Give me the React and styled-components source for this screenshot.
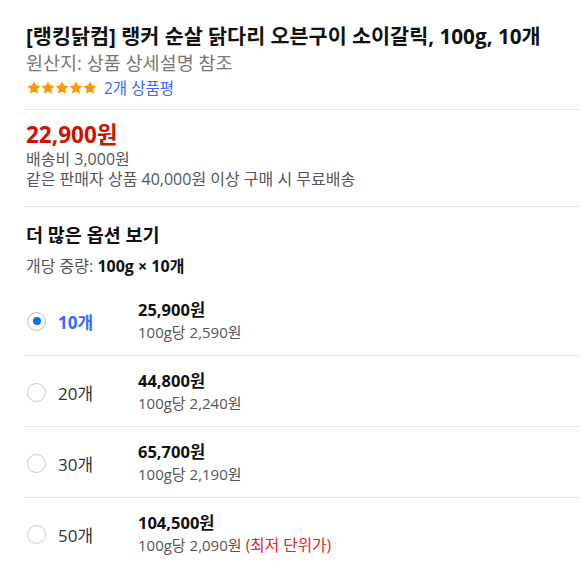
import React from 'react';
import styled, { createGlobalStyle } from 'styled-components';

const GlobalStyle = createGlobalStyle`
    body {
        margin: 0;
        background: #fff;
        font-family: 'Open Sans', 'Noto Sans CJK KR', sans-serif;
        color: #111;
    }
`;

const Page = styled.div`
    padding: 22px 0 0 24px;
    overflow: hidden;
`;

const Section = styled.section`
    border-bottom: ${(props) => (props.last ? 'none' : '1px solid #e5e5e5')};
    padding-bottom: ${(props) => props.pb || 0}px;
    padding-top: ${(props) => props.pt || 0}px;
`;

const Text = styled.div`
    padding-left: 2px;
`;

const Title = styled.h1`
    margin: 0;
    padding-left: 2px;
    font-size: 20.7px;
    line-height: 28px;
    font-weight: 700;
    color: #111;
    white-space: nowrap;
`;

const Origin = styled(Text)`
    margin-top: 2px;
    font-size: 18.5px;
    line-height: 22px;
    color: #777;
`;

const Rating = styled(Text)`
    margin-top: 4px;
    display: flex;
    align-items: center;
    gap: 7px;
    font-size: 15.5px;
    line-height: 20px;
`;

const Stars = styled.span`
    display: flex;
    padding-left: 1px;
`;

const ReviewLink = styled.a`
    color: #346aff;
    text-decoration: none;
`;

const Price = styled(Text)`
    font-size: 22.5px;
    line-height: 28px;
    font-weight: 700;
    color: #cb1400;
`;

const Note = styled(Text)`
    font-size: 16px;
    line-height: 20px;
    color: #555;
`;

const Heading = styled.h2`
    margin: 0;
    padding-left: 2px;
    font-size: 18.5px;
    line-height: 24px;
    font-weight: 700;
    color: #111;
`;

const Weight = styled(Text)`
    margin-top: 9px;
    font-size: 16px;
    line-height: 20px;
    color: #555;

    b {
        color: #111;
    }
`;

const Options = styled.div`
    margin-top: 9px;
`;

const Row = styled.label`
    display: flex;
    align-items: center;
    padding: 14px 0 12px 3px;
    border-bottom: ${(props) => (props.last ? 'none' : '1px solid #e5e5e5')};
    cursor: pointer;
`;

const Radio = styled.span`
    width: 19px;
    height: 19px;
    box-sizing: border-box;
    border-radius: 50%;
    border: 1px solid ${(props) => (props.checked ? '#bbb' : '#c8c8c8')};
    display: flex;
    align-items: center;
    justify-content: center;
    flex-shrink: 0;

    &::after {
        content: '';
        width: 8px;
        height: 8px;
        border-radius: 50%;
        background: ${(props) => (props.checked ? '#0073e9' : 'transparent')};
    }
`;

const Count = styled.span`
    margin-left: 12px;
    width: 80px;
    font-size: 17px;
    font-weight: ${(props) => (props.checked ? 700 : 400)};
    color: ${(props) => (props.checked ? '#346aff' : '#333')};
`;

const Info = styled.div`
    display: flex;
    flex-direction: column;
`;

const OptionPrice = styled.span`
    font-size: 16.5px;
    line-height: 22px;
    font-weight: 700;
    color: #111;
`;

const UnitPrice = styled.span`
    font-size: 15px;
    line-height: 22px;
    color: #555;
`;

const Lowest = styled.span`
    font-size: 15.7px;
    color: #e52528;
`;

const Star = () => (
    <svg width="14" height="14" viewBox="0 0 24 24">
        <path
            fill="#ff9600"
            d="M12 0.6l3.4 7.2 7.9.8-6 5.4 1.8 7.9L12 17.8l-7.1 4.1 1.8-7.9-6-5.4 7.9-.8z"
        />
    </svg>
);

const options = [
    { count: '10개', price: '25,900원', unit: '100g당 2,590원', checked: true },
    { count: '20개', price: '44,800원', unit: '100g당 2,240원' },
    { count: '30개', price: '65,700원', unit: '100g당 2,190원' },
    { count: '50개', price: '104,500원', unit: '100g당 2,090원', lowest: true },
];

const App = () => (
    <>
        <GlobalStyle />
        <Page>
            <Section pb={11}>
                <Title>[랭킹닭컴] 랭커 순살 닭다리 오븐구이 소이갈릭, 100g, 10개</Title>
                <Origin>원산지: 상품 상세설명 참조</Origin>
                <Rating>
                    <Stars>
                        {[0, 1, 2, 3, 4].map((i) => (
                            <Star key={i} />
                        ))}
                    </Stars>
                    <ReviewLink href="#">2개 상품평</ReviewLink>
                </Rating>
            </Section>
            <Section pt={11} pb={17}>
                <Price>22,900원</Price>
                <Note>배송비 3,000원</Note>
                <Note>같은 판매자 상품 40,000원 이상 구매 시 무료배송</Note>
            </Section>
            <Section pt={16} last>
                <Heading>더 많은 옵션 보기</Heading>
                <Weight>
                    개당 중량: <b>100g × 10개</b>
                </Weight>
                <Options>
                    {options.map((o, i) => (
                        <Row key={o.count} last={i === options.length - 1}>
                            <Radio checked={o.checked} />
                            <Count checked={o.checked}>{o.count}</Count>
                            <Info>
                                <OptionPrice>{o.price}</OptionPrice>
                                <UnitPrice>
                                    {o.unit}
                                    {o.lowest && <Lowest> (최저 단위가)</Lowest>}
                                </UnitPrice>
                            </Info>
                        </Row>
                    ))}
                </Options>
            </Section>
        </Page>
    </>
);

export default App;
